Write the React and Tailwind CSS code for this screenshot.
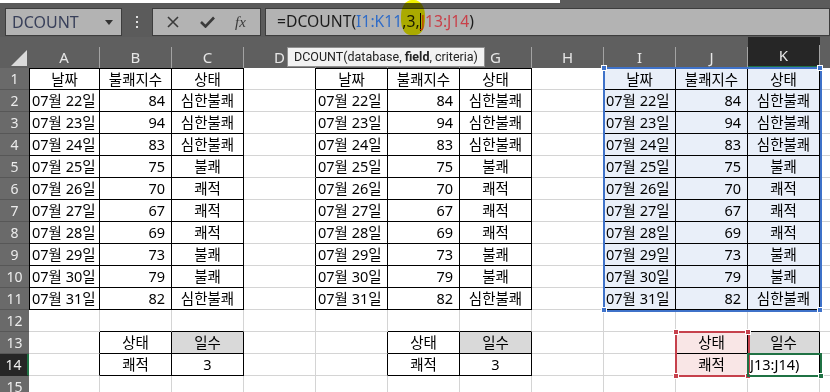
import React from "react";

const dates = ["07월 22일", "07월 23일", "07월 24일", "07월 25일", "07월 26일", "07월 27일", "07월 28일", "07월 29일", "07월 30일", "07월 31일"];
const values = [84, 94, 83, 75, 70, 67, 69, 73, 79, 82];
const states = ["심한불쾌", "심한불쾌", "심한불쾌", "불쾌", "쾌적", "쾌적", "쾌적", "불쾌", "불쾌", "심한불쾌"];
const letters = ["A", "B", "C", "D", "E", "F", "G", "H", "I", "J", "K"];
const rows = [1, 2, 3, 4, 5, 6, 7, 8, 9, 10, 11, 12, 13, 14, 15];

const inTable = (r, c) => {
  if (r >= 1 && r <= 11) return (c >= 0 && c <= 2) || (c >= 4 && c <= 6) || (c >= 8 && c <= 10);
  if (r === 13 || r === 14) return (c >= 1 && c <= 2) || (c >= 5 && c <= 6) || (c >= 9 && c <= 10);
  return false;
};

const cellInfo = (r, c) => {
  if (!inTable(r, c)) return { text: "", align: "left", bg: "" };
  if (r <= 11) {
    const k = c % 4;
    const bg = c >= 8 ? "bg-[#e9eff9]" : "";
    if (r === 1) return { text: ["날짜", "불쾌지수", "상태"][k], align: "center", bg };
    if (k === 0) return { text: dates[r - 2], align: "left", bg };
    if (k === 1) return { text: values[r - 2], align: "right", bg };
    return { text: states[r - 2], align: "center", bg };
  }
  const k = c % 4;
  if (r === 13) {
    if (k === 1) return { text: "상태", align: "center", bg: c === 9 ? "bg-[#f9e6e6]" : "" };
    return { text: "일수", align: "center", bg: "bg-[#d9d9d9]" };
  }
  if (k === 1) return { text: "쾌적", align: "center", bg: c === 9 ? "bg-[#f9e6e6]" : "" };
  if (c === 10) return { text: "J13:J14)", align: "left", bg: "" };
  return { text: "3", align: "center", bg: "" };
};

const Cell = ({ r, c }) => {
  const info = cellInfo(r, c);
  const right = inTable(r, c) || inTable(r, c + 1) ? "border-r-black" : "border-r-[#d4d4d4]";
  const bottom = inTable(r, c) || inTable(r + 1, c) ? "border-b-black" : "border-b-[#d4d4d4]";
  const top = r === 1 && inTable(r, c) ? "border-t border-t-black" : "";
  const left = c === 0 && inTable(r, c) ? "border-l border-l-black" : "";
  const align =
    info.align === "center" ? "justify-center" : info.align === "right" ? "justify-end pr-[6px]" : "justify-start pl-[2px]";
  return (
    <div
      className={`${c === 0 ? "w-[71px]" : "w-[72px]"} h-[22px] shrink-0 flex items-center border-r border-b ${right} ${bottom} ${top} ${left} ${align} ${info.bg || "bg-white"}`}
    >
      <span className="text-[14.5px] leading-none text-black whitespace-nowrap">{info.text}</span>
    </div>
  );
};

const Handle = ({ className }) => (
  <div className={`absolute w-[6px] h-[6px] border border-white ${className}`} />
);

export default function App() {
  return (
    <div
      className="relative w-[830px] h-[392px] overflow-hidden bg-[#5b5b5b]"
      style={{ fontFamily: '"Noto Sans", "Noto Sans CJK KR", sans-serif' }}
    >
      {/* top strip + formula bar */}
      <div className="h-[3px] w-[560px] bg-white" />
      <div className="h-[34px] flex items-start pt-[5px] pl-[5px] gap-[4px]">
        <div className="w-[117px] h-[28px] bg-[#b3b3b3] border border-[#3d3d3d] flex items-center pl-[6px] pr-[8px]">
          <span className="flex-1 text-[16px] text-[#39405a] leading-none">DCOUNT</span>
          <svg width="8" height="5" viewBox="0 0 8 5">
            <polygon points="0,0 8,0 4,5" fill="#333" />
          </svg>
        </div>
        <div className="w-[22px] h-[28px] flex items-center justify-center">
          <svg width="4" height="12" viewBox="0 0 4 12">
            <rect x="1" y="0" width="2" height="2" fill="#e0e0e0" />
            <rect x="1" y="5" width="2" height="2" fill="#e0e0e0" />
            <rect x="1" y="10" width="2" height="2" fill="#e0e0e0" />
          </svg>
        </div>
        <div className="w-[109px] h-[28px] bg-[#b3b3b3] border border-[#3d3d3d] flex items-center justify-around px-[4px]">
          <svg width="12" height="12" viewBox="0 0 12 12">
            <path d="M1 1 L11 11 M11 1 L1 11" stroke="#3a3a3a" strokeWidth="1.6" />
          </svg>
          <svg width="15" height="12" viewBox="0 0 15 12">
            <path d="M1 6 L5.5 10.5 L14 1.5" stroke="#3a3a3a" strokeWidth="2.6" fill="none" />
          </svg>
          <span className="text-[15px] italic text-[#3a3a3a] leading-none" style={{ fontFamily: '"Liberation Serif", serif' }}>
            fx
          </span>
        </div>
        <div className="flex-1 h-[28px] bg-[#b3b3b3] border border-[#3d3d3d] flex items-center pl-[11px]">
          <span className="text-[15.7px] leading-none text-[#1c1c1c] whitespace-nowrap flex items-center">
            =DCOUNT(<span className="text-[#2f6cc8]">I1:K11</span>,3,
            <span className="inline-block w-px h-[18px] bg-black" />
            <span className="text-[#c8414a]">J13:J14</span>)
          </span>
        </div>
      </div>

      {/* column headers */}
      <div className="flex h-[31px] bg-[#5f5f5f]">
        <div className="w-[29px] shrink-0 flex items-end justify-end pb-[2px] pr-[2px]">
          <svg width="16" height="16" viewBox="0 0 16 16">
            <polygon points="16,0 16,16 0,16" fill="#dadada" />
          </svg>
        </div>
        {letters.map((l, i) => (
          <div
            key={l}
            className={`${i === 0 ? "w-[71px]" : "w-[72px]"} shrink-0 flex items-end ${l === "K" ? "bg-[#262626] border-b-2 border-b-[#1f7244]" : ""}`}
          >
            <div className="flex-1 h-[21px] flex items-center justify-center text-[15px] text-[#e6e6e6] leading-none">{l}</div>
            <div className="w-px h-[21px] bg-[#a3a3a3]" />
          </div>
        ))}
        <div className="flex-1" />
      </div>

      {/* grid body */}
      <div className="flex flex-col">
        {rows.map((r) => (
          <div key={r} className="flex h-[22px]">
            <div
              className={`w-[29px] shrink-0 h-[22px] flex items-center justify-center text-[14px] leading-none border-b ${
                r === 14 ? "bg-[#262626] text-[#f0f0f0] border-b-[#262626] border-r-2 border-r-[#1f7244]" : "bg-[#6a6a6a] text-[#ececec] border-b-[#575757]"
              }`}
            >
              {r}
            </div>
            {letters.map((l, c) => (
              <Cell key={l} r={r} c={c} />
            ))}
            <div className="flex-1 h-[22px] bg-white border-b border-b-[#d4d4d4]" />
          </div>
        ))}
      </div>

      {/* blue range I1:K11 */}
      <div className="absolute left-[603px] top-[67px] w-[219px] h-[245px] border-2 border-[#3f72c9]" />
      <Handle className="left-[601px] top-[65px] bg-[#3f72c9]" />
      <Handle className="left-[817px] top-[65px] bg-[#3f72c9]" />
      <Handle className="left-[601px] top-[307px] bg-[#3f72c9]" />
      <Handle className="left-[817px] top-[307px] bg-[#3f72c9]" />

      {/* red range J13:J14 */}
      <div className="absolute left-[675px] top-[331px] w-[75px] h-[46px] border-2 border-[#c6414c]" />
      <Handle className="left-[673px] top-[329px] bg-[#c6414c]" />
      <Handle className="left-[745px] top-[329px] bg-[#c6414c]" />
      <Handle className="left-[673px] top-[373px] bg-[#c6414c]" />
      <Handle className="left-[745px] top-[373px] bg-[#c6414c]" />

      {/* active cell K14 */}
      <div className="absolute left-[747px] top-[353px] w-[75px] h-[24px] border-2 border-[#1f7244]" />
      <Handle className="left-[818px] top-[373px] bg-[#1f7244]" />

      {/* function tooltip */}
      <div
        className="absolute left-[287px] top-[47px] h-[20px] px-[6px] flex items-center bg-[#f2f2f2] border border-[#8f8f8f] text-[12.5px] text-[#222] leading-none whitespace-nowrap"
        style={{ fontFamily: 'Roboto, "Noto Sans", sans-serif' }}
      >
        DCOUNT(database,&nbsp;<b>field</b>, criteria)
      </div>

      {/* marker highlight */}
      <div className="absolute left-[401px] top-0 w-[24px] h-[35px] rounded-[45%_45%_40%_40%] bg-[#f2f200] mix-blend-multiply" />
    </div>
  );
}
